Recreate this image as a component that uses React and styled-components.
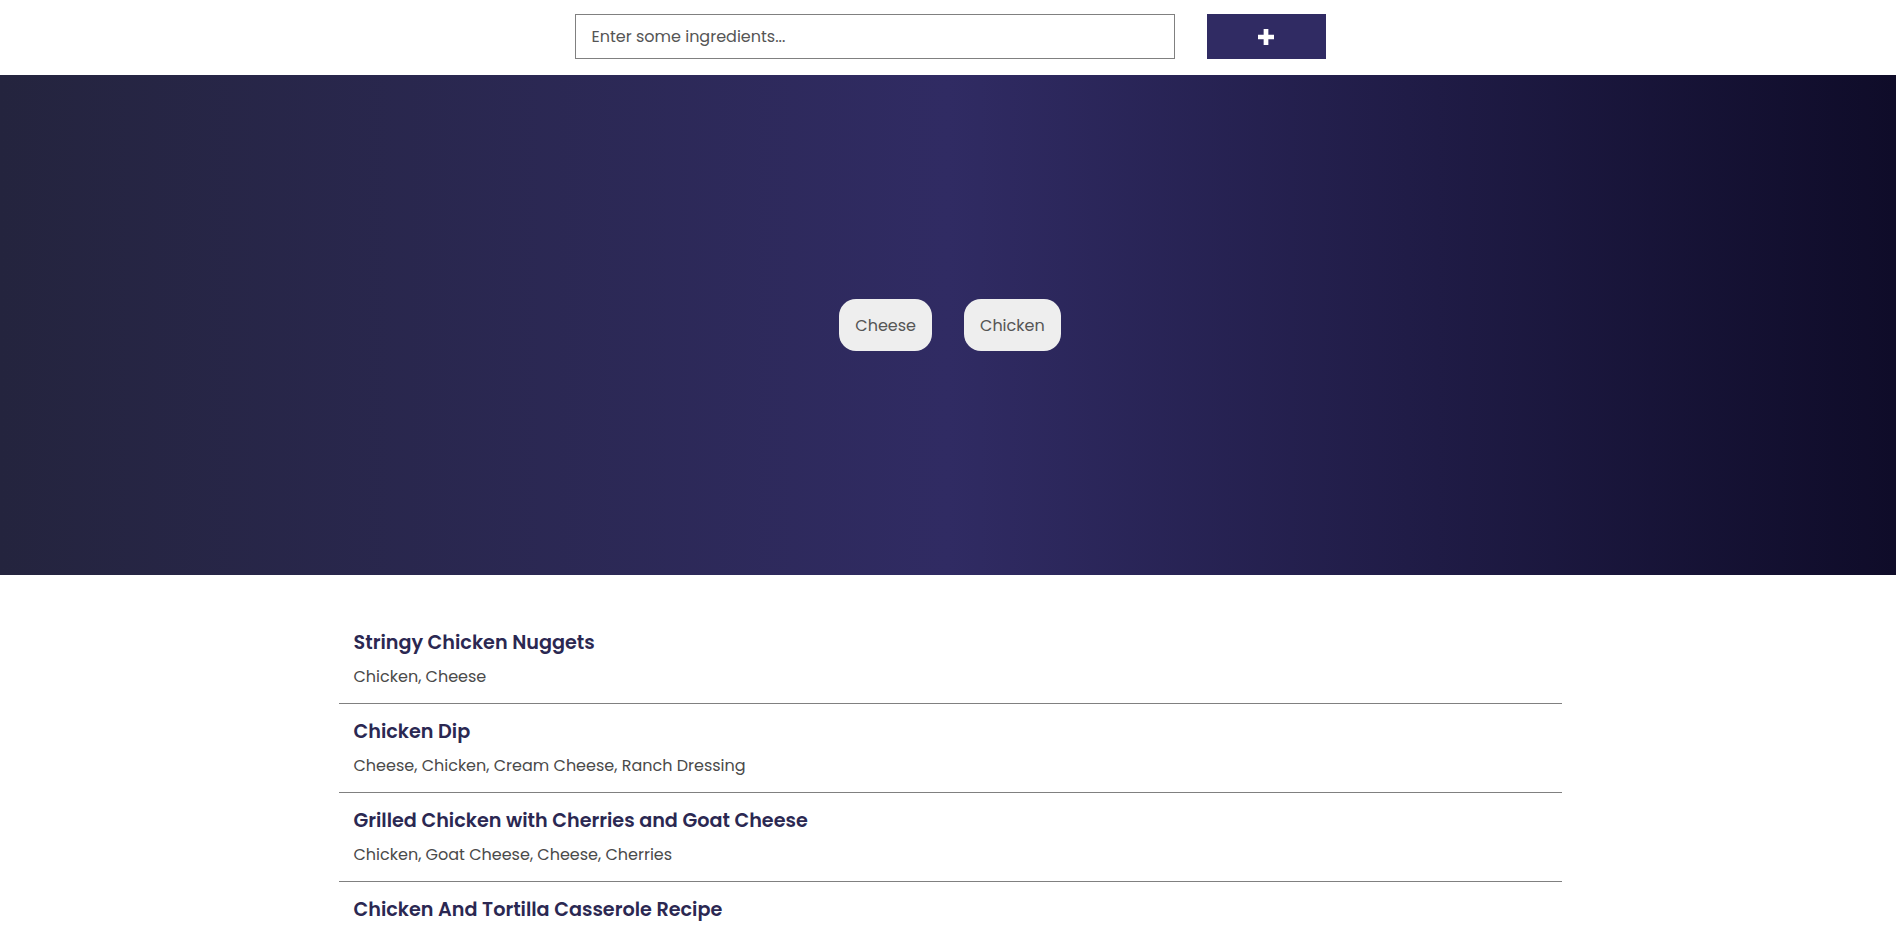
import { useState } from "react";
import styled, { createGlobalStyle } from "styled-components";

const GlobalStyle = createGlobalStyle`
  * { box-sizing: border-box; }
  body {
    margin: 0;
    background: #fff;
    font-family: "Poppins", "Inter", "Noto Sans", sans-serif;
  }
`;

const TopBar = styled.div`
  display: flex;
  justify-content: center;
  align-items: center;
  gap: 32px;
  height: 75px;
  padding: 14px 0 16px 4px;
`;

const SearchInput = styled.input`
  width: 600px;
  height: 45px;
  border: 1px solid #808080;
  padding: 0 16px;
  font-family: inherit;
  font-size: 16px;
  color: #333;
  outline: none;
  &::placeholder {
    color: #555;
  }
`;

const AddButton = styled.button`
  width: 119px;
  height: 45px;
  border: none;
  background: #302b63;
  display: flex;
  align-items: center;
  justify-content: center;
  cursor: pointer;
`;

const Hero = styled.div`
  height: 500px;
  background: linear-gradient(to right, #24243e, #302b63, #0f0c29);
  display: flex;
  justify-content: center;
  align-items: center;
  gap: 32px;
  padding-left: 4px;
`;

const Chip = styled.div`
  background: #eeeeee;
  color: #555;
  border-radius: 17px;
  padding: 0 16px;
  height: 52px;
  display: flex;
  align-items: center;
  font-size: 16px;
`;

const Main = styled.main`
  display: flex;
  justify-content: center;
  padding: 40px 0 0 4px;
`;

const List = styled.div`
  width: 1223px;
`;

const Recipe = styled.div`
  padding: 13px 15px 14px;
  border-bottom: 1px solid #808080;
`;

const Title = styled.h3`
  margin: 0;
  font-size: 19.2px;
  line-height: 30px;
  font-weight: 600;
  color: #2b2852;
`;

const Ingredients = styled.p`
  margin: 7px 0 0;
  font-size: 16px;
  line-height: 24px;
  color: #4a4a4a;
`;

const recipes = [
  { title: "Stringy Chicken Nuggets", items: ["Chicken", "Cheese"] },
  { title: "Chicken Dip", items: ["Cheese", "Chicken", "Cream Cheese", "Ranch Dressing"] },
  { title: "Grilled Chicken with Cherries and Goat Cheese", items: ["Chicken", "Goat Cheese", "Cheese", "Cherries"] },
  { title: "Chicken And Tortilla Casserole Recipe", items: ["Chicken", "Cheese", "Tortillas", "Salsa"] },
];

function App() {
  let [text, setText] = useState("");
  let [ingredients] = useState(["Cheese", "Chicken"]);

  return (
    <>
      <GlobalStyle />
      <TopBar>
        <SearchInput
          placeholder="Enter some ingredients..."
          value={text}
          onChange={(e) => setText(e.target.value)}
        />
        <AddButton>
          <svg width="16" height="16" viewBox="0 0 17 17">
            <path d="M6 0h5v6h6v5h-6v6H6v-6H0V6h6z" fill="#fff" />
          </svg>
        </AddButton>
      </TopBar>
      <Hero>
        {ingredients.map((x) => (
          <Chip key={x}>{x}</Chip>
        ))}
      </Hero>
      <Main>
        <List>
          {recipes.map((r) => (
            <Recipe key={r.title}>
              <Title>{r.title}</Title>
              <Ingredients>{r.items.join(", ")}</Ingredients>
            </Recipe>
          ))}
        </List>
      </Main>
    </>
  );
}
export default App;
